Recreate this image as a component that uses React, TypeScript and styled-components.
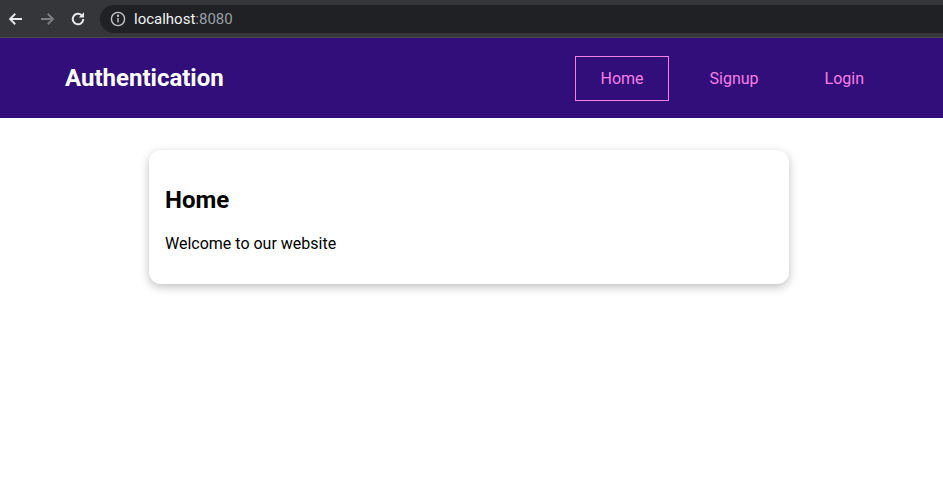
import React from 'react'
import styled, { createGlobalStyle } from "styled-components";

const GlobalStyle = createGlobalStyle`
  * {
    box-sizing: border-box;
  }
  body {
    margin: 0;
    font-family: Roboto, "Liberation Sans", sans-serif;
    background: #fff;
  }
`;

const Chrome = styled.div`
  height: 38px;
  background: #35363a;
  display: flex;
  align-items: center;
  border-bottom: 1px solid #4a4b4f;
`;

const NavIcon = styled.div<{ $dim?: boolean }>`
  width: 31px;
  height: 28px;
  display: flex;
  align-items: center;
  justify-content: center;
  color: ${(p) => (p.$dim ? "#7d7e82" : "#e8eaed")};
`;

const AddressBar = styled.div`
  flex: 1;
  height: 28px;
  margin-left: 7px;
  background: #202124;
  border-radius: 14px 0 0 14px;
  display: flex;
  align-items: center;
  padding-left: 10px;
  gap: 8px;
  font-size: 15px;
  color: #f1f3f4;
`;

const Port = styled.span`
  color: #9aa0a6;
`;

const Header = styled.header`
  height: 80px;
  background: #310e7a;
  display: flex;
  align-items: center;
  justify-content: space-between;
  padding: 0 54px 0 65px;
`;

const Logo = styled.h1`
  margin: 0;
  color: #fff;
  font-size: 24px;
  font-weight: 700;
`;

const Nav = styled.nav`
  display: flex;
  gap: 16px;
`;

const NavLink = styled.a<{ $active?: boolean }>`
  display: block;
  padding: 12px 24px;
  font-size: 16px;
  color: #f77fe6;
  text-decoration: none;
  border: 1px solid ${(p) => (p.$active ? "#f77fe6" : "transparent")};
`;

const Main = styled.main`
  display: flex;
  justify-content: center;
  align-items: flex-start;
  min-height: calc(100vh - 118px);
  padding: 32px 5px 40px 0;
`;

const Card = styled.div`
  width: 640px;
  padding: 20px 16px 31px;
  background: #fff;
  border-radius: 12px;
  box-shadow: 0 3px 10px rgba(0, 0, 0, 0.25);
`;

const Title = styled.h2`
  margin: 16px 0 20px;
  font-size: 24px;
  font-weight: 700;
`;

const Text = styled.p`
  margin: 0;
  font-size: 16px;
`;

const App = () => {
  return (
    <>
      <GlobalStyle />
      <Chrome>
        <NavIcon>
          <svg width="18" height="18" viewBox="0 0 24 24" fill="none" stroke="currentColor" strokeWidth="2.4">
            <path d="M20 12H5M11 5l-7 7 7 7" />
          </svg>
        </NavIcon>
        <NavIcon $dim>
          <svg width="18" height="18" viewBox="0 0 24 24" fill="none" stroke="currentColor" strokeWidth="2.4">
            <path d="M4 12h15M13 5l7 7-7 7" />
          </svg>
        </NavIcon>
        <NavIcon>
          <svg width="18" height="18" viewBox="0 0 24 24" fill="none" stroke="currentColor" strokeWidth="2.6">
            <path d="M19 12a7 7 0 1 1-2.2-5.1" />
            <path d="M13 10h7V3z" fill="currentColor" stroke="none" />
          </svg>
        </NavIcon>
        <AddressBar>
          <svg width="16" height="16" viewBox="0 0 16 16" fill="none" stroke="#c4c7c5" strokeWidth="1.4">
            <circle cx="8" cy="8" r="6.6" />
            <path d="M8 7v4.5" />
            <circle cx="8" cy="4.8" r="0.5" fill="#c4c7c5" />
          </svg>
          <span>
            localhost<Port>:8080</Port>
          </span>
        </AddressBar>
      </Chrome>
      <Header>
        <Logo>Authentication</Logo>
        <Nav>
          <NavLink $active href="#">Home</NavLink>
          <NavLink href="#">Signup</NavLink>
          <NavLink href="#">Login</NavLink>
        </Nav>
      </Header>
      <Main>
        <Card>
          <Title>Home</Title>
          <Text>Welcome to our website</Text>
        </Card>
      </Main>
    </>
  );
};

export default App
